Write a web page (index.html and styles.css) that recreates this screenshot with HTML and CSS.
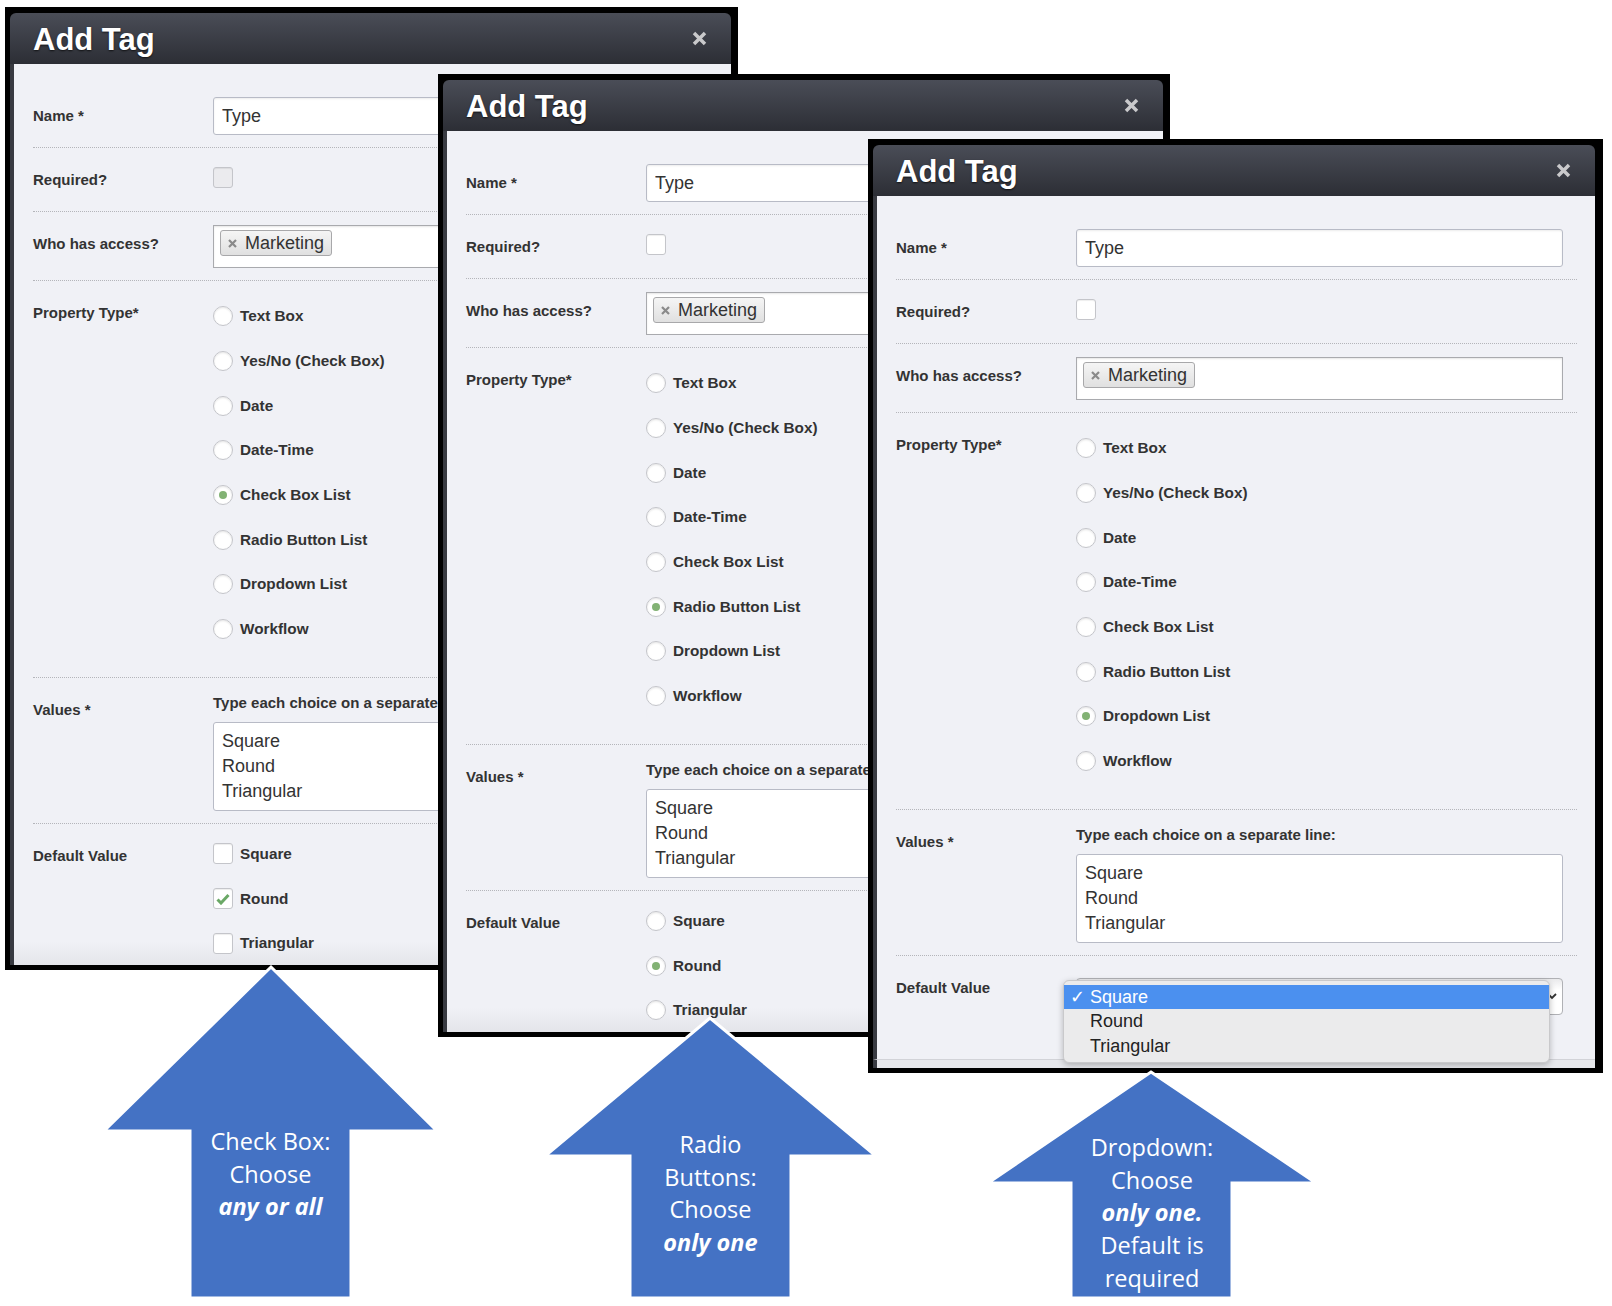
FILE: index.html
```html
<!DOCTYPE html>
<html lang="en">
<head>
  <meta charset="UTF-8">
  <meta name="viewport" content="width=device-width, initial-scale=1.0">
  <title>Add Tag - property types</title>
  <link rel="stylesheet" href="styles.css">
</head>
<body>
<div class="canvas">

  <!-- check box list -->
  <section class="win win-1">
    <div class="modal">
      <header class="modal-head">
        <h2>Add Tag</h2>
        <svg class="close" width="15" height="15" viewBox="0 0 15 15"><path d="M2 2L13 13M13 2L2 13"/></svg>
      </header>
      <div class="modal-body">
        <div class="row">
          <div class="row-label">Name *</div>
          <div class="row-field"><input class="text-input" type="text" value="Type"></div>
        </div>
        <div class="row">
          <div class="row-label">Required?</div>
          <div class="row-field"><div class="check-wrap"><span class="checkbox is-muted"></span></div></div>
        </div>
        <div class="row">
          <div class="row-label">Who has access?</div>
          <div class="row-field">
            <div class="tag-box"><span class="tag"><svg class="tag-x" width="9" height="9" viewBox="0 0 9 9"><path d="M1 1L8 8M8 1L1 8"/></svg>Marketing</span></div>
          </div>
        </div>
        <div class="row">
          <div class="row-label">Property Type*</div>
          <div class="row-field opt-list">
            <div class="opt"><span class="radio"></span>Text Box</div>
            <div class="opt"><span class="radio"></span>Yes/No (Check Box)</div>
            <div class="opt"><span class="radio"></span>Date</div>
            <div class="opt"><span class="radio"></span>Date-Time</div>
            <div class="opt"><span class="radio is-on"></span>Check Box List</div>
            <div class="opt"><span class="radio"></span>Radio Button List</div>
            <div class="opt"><span class="radio"></span>Dropdown List</div>
            <div class="opt"><span class="radio"></span>Workflow</div>
          </div>
        </div>
        <div class="row">
          <div class="row-label">Values *</div>
          <div class="row-field">
            <div class="help">Type each choice on a separate line:</div>
            <textarea class="values" rows="3">Square
Round
Triangular</textarea>
          </div>
        </div>
        <div class="row row-last">
          <div class="row-label">Default Value</div>
          <div class="row-field opt-list is-default">
            <div class="opt"><span class="checkbox"></span>Square</div>
            <div class="opt"><span class="checkbox"><svg width="14" height="12" viewBox="0 0 14 12"><path class="tick" d="M1.5 6.5L5 10L12.5 2"/></svg></span>Round</div>
            <div class="opt"><span class="checkbox"></span>Triangular</div>
          </div>
        </div>
      </div>
    </div>
  </section>

  <!-- radio button list -->
  <section class="win win-2">
    <div class="modal">
      <header class="modal-head">
        <h2>Add Tag</h2>
        <svg class="close" width="15" height="15" viewBox="0 0 15 15"><path d="M2 2L13 13M13 2L2 13"/></svg>
      </header>
      <div class="modal-body">
        <div class="row">
          <div class="row-label">Name *</div>
          <div class="row-field"><input class="text-input" type="text" value="Type"></div>
        </div>
        <div class="row">
          <div class="row-label">Required?</div>
          <div class="row-field"><div class="check-wrap"><span class="checkbox"></span></div></div>
        </div>
        <div class="row">
          <div class="row-label">Who has access?</div>
          <div class="row-field">
            <div class="tag-box"><span class="tag"><svg class="tag-x" width="9" height="9" viewBox="0 0 9 9"><path d="M1 1L8 8M8 1L1 8"/></svg>Marketing</span></div>
          </div>
        </div>
        <div class="row">
          <div class="row-label">Property Type*</div>
          <div class="row-field opt-list">
            <div class="opt"><span class="radio"></span>Text Box</div>
            <div class="opt"><span class="radio"></span>Yes/No (Check Box)</div>
            <div class="opt"><span class="radio"></span>Date</div>
            <div class="opt"><span class="radio"></span>Date-Time</div>
            <div class="opt"><span class="radio"></span>Check Box List</div>
            <div class="opt"><span class="radio is-on"></span>Radio Button List</div>
            <div class="opt"><span class="radio"></span>Dropdown List</div>
            <div class="opt"><span class="radio"></span>Workflow</div>
          </div>
        </div>
        <div class="row">
          <div class="row-label">Values *</div>
          <div class="row-field">
            <div class="help">Type each choice on a separate line:</div>
            <textarea class="values" rows="3">Square
Round
Triangular</textarea>
          </div>
        </div>
        <div class="row row-last">
          <div class="row-label">Default Value</div>
          <div class="row-field opt-list is-default">
            <div class="opt"><span class="radio"></span>Square</div>
            <div class="opt"><span class="radio is-on"></span>Round</div>
            <div class="opt"><span class="radio"></span>Triangular</div>
          </div>
        </div>
      </div>
    </div>
  </section>

  <!-- dropdown list -->
  <section class="win win-3">
    <div class="modal">
      <header class="modal-head">
        <h2>Add Tag</h2>
        <svg class="close" width="15" height="15" viewBox="0 0 15 15"><path d="M2 2L13 13M13 2L2 13"/></svg>
      </header>
      <div class="modal-body">
        <div class="row">
          <div class="row-label">Name *</div>
          <div class="row-field"><input class="text-input" type="text" value="Type"></div>
        </div>
        <div class="row">
          <div class="row-label">Required?</div>
          <div class="row-field"><div class="check-wrap"><span class="checkbox"></span></div></div>
        </div>
        <div class="row">
          <div class="row-label">Who has access?</div>
          <div class="row-field">
            <div class="tag-box"><span class="tag"><svg class="tag-x" width="9" height="9" viewBox="0 0 9 9"><path d="M1 1L8 8M8 1L1 8"/></svg>Marketing</span></div>
          </div>
        </div>
        <div class="row">
          <div class="row-label">Property Type*</div>
          <div class="row-field opt-list">
            <div class="opt"><span class="radio"></span>Text Box</div>
            <div class="opt"><span class="radio"></span>Yes/No (Check Box)</div>
            <div class="opt"><span class="radio"></span>Date</div>
            <div class="opt"><span class="radio"></span>Date-Time</div>
            <div class="opt"><span class="radio"></span>Check Box List</div>
            <div class="opt"><span class="radio"></span>Radio Button List</div>
            <div class="opt"><span class="radio is-on"></span>Dropdown List</div>
            <div class="opt"><span class="radio"></span>Workflow</div>
          </div>
        </div>
        <div class="row">
          <div class="row-label">Values *</div>
          <div class="row-field">
            <div class="help">Type each choice on a separate line:</div>
            <textarea class="values" rows="3">Square
Round
Triangular</textarea>
          </div>
        </div>
        <div class="row row-last">
          <div class="row-label">Default Value</div>
          <div class="row-field">
            <div class="select">
              <svg class="select-caret" width="10" height="8" viewBox="0 0 10 8"><path d="M1 2L5 6L9 2"/></svg>
              <ul class="select-menu">
                <li class="is-on">Square</li>
                <li>Round</li>
                <li>Triangular</li>
              </ul>
            </div>
          </div>
        </div>
      </div>
      <div class="modal-foot"></div>
    </div>
  </section>

  <div class="arrow arrow-1">
    <svg class="arrow-shape" viewBox="0 0 333 331" preserveAspectRatio="none"><polygon points="167,0 333,164 247,164 247,331 86,331 86,164 0,164"/></svg>
    <p class="arrow-text">Check Box:<br>Choose<br><em>any or all</em></p>
  </div>
  <div class="arrow arrow-2">
    <svg class="arrow-shape" viewBox="0 0 331 280" preserveAspectRatio="none"><polygon points="165,0 331,138 246,138 246,280 85,280 85,138 0,138"/></svg>
    <p class="arrow-text">Radio<br>Buttons:<br>Choose<br><em>only one</em></p>
  </div>
  <div class="arrow arrow-3">
    <svg class="arrow-shape" viewBox="0 0 328 226" preserveAspectRatio="none"><polygon points="163,0 328,111 244,111 244,226 83,226 83,111 0,111"/></svg>
    <p class="arrow-text">Dropdown:<br>Choose<br><em>only one.</em><br>Default is<br>required</p>
  </div>

</div>
</body>
</html>
```

FILE: styles.css
```css
* { box-sizing: border-box; }
body { margin: 0; background: #fff; font-family: "Liberation Sans", Arial, sans-serif; color: #333; }
.canvas { position: relative; width: 1612px; height: 1306px; overflow: hidden; }

/* screenshot frames */
.win { position: absolute; background: #000; padding: 6px 7px 5px 5px; }
.win-1 { left: 5px; top: 7px; width: 733px; height: 963px; }
.win-2 { left: 438px; top: 74px; width: 732px; height: 963px; }
.win-3 { left: 868px; top: 139px; width: 735px; height: 934px; padding-right: 8px; }

.modal { display: flex; flex-direction: column; height: 100%; border-radius: 6px 6px 0 0; overflow: hidden; }
.modal-head { height: 51px; flex: none; display: flex; align-items: center; justify-content: space-between; padding: 2px 24px 0 23px; background: linear-gradient(#4a4d57, #2c2e35); }
.modal-head h2 { margin: 0; font-size: 31px; font-weight: bold; color: #fff; text-shadow: 0 1px 2px rgba(0,0,0,.7); }
.close { margin-top: -2px; }
.close path { stroke: #c9c9cb; stroke-width: 3.5; fill: none; }

.modal-body { flex: 1; min-height: 0; overflow: hidden; padding: 20px 18px 0 19px; border-left: 4px solid #383a41; background: linear-gradient(#f0f1f6 calc(100% - 24px), #e4e5ea); }
.win-3 .modal-body { overflow: visible; background: #f0f1f6; }
.modal-foot { height: 9px; flex: none; border-left: 4px solid #383a41; border-top: 1px solid #d2d3d8; background: #e6e7eb; }

/* form rows */
.row { display: flex; padding: 13px 14px 12px 0; border-bottom: 1px dotted #b4b5ba; }
.row-last { border-bottom: none; }
.row-label { width: 180px; flex: none; font-size: 15px; font-weight: bold; line-height: 38px; color: #333; }
.row-field { flex: 1; min-width: 0; }

.text-input { display: block; width: 100%; height: 38px; padding: 0 8px; font: 18px "Liberation Sans", Arial, sans-serif; color: #333; border: 1px solid #b8bbc6; border-radius: 3px; background: #fff; box-shadow: inset 0 1px 2px rgba(0,0,0,.08); outline: none; }
.check-wrap { height: 38px; padding-top: 6px; }

.checkbox { display: flex; align-items: center; justify-content: center; flex: none; width: 20px; height: 21px; border: 1px solid #c4c5ca; border-radius: 3px; background: #fff; box-shadow: inset 0 1px 1px rgba(0,0,0,.07); }
.checkbox.is-muted { background: #ebebee; }
.tick { fill: none; stroke: #6aa866; stroke-width: 3; }
.radio { display: flex; align-items: center; justify-content: center; flex: none; width: 20px; height: 20px; border: 1px solid #c4c5ca; border-radius: 50%; background: #fff; box-shadow: inset 0 1px 2px rgba(0,0,0,.1); }
.radio.is-on::after { content: ""; width: 8px; height: 8px; border-radius: 50%; background: #82b274; }

.tag-box { height: 43px; padding: 4px 6px; border: 1px solid #a9aaae; background: #fff; box-shadow: inset 0 1px 2px rgba(0,0,0,.1); }
.tag { display: inline-flex; align-items: center; height: 26px; padding: 0 7px 0 7px; border: 1px solid #a8a8aa; border-radius: 3px; background: linear-gradient(#f5f5f5, #e0e0e0); font-size: 18px; color: #333; }
.tag-x { margin-right: 8px; }
.tag-x path { stroke: #8a8a8a; stroke-width: 2.2; fill: none; }

.opt-list { padding-bottom: 13px; }
.opt-list.is-default { margin-top: -5px; padding-bottom: 0; }
.opt { display: flex; align-items: center; height: 44.7px; font-size: 15.3px; font-weight: bold; color: #333; }
.opt .radio, .opt .checkbox { margin-right: 7px; }

.help { font-size: 15px; font-weight: bold; line-height: 24px; white-space: nowrap; }
.values { display: block; width: 100%; height: 89px; margin-top: 7px; padding: 6px 8px; font: 18px/25px "Liberation Sans", Arial, sans-serif; color: #333; border: 1px solid #b8bbc6; border-radius: 3px; background: #fff; resize: none; overflow: hidden; outline: none; }

/* dropdown */
.select { position: relative; height: 37px; margin-top: 9px; border: 1px solid #b0b1b5; border-radius: 4px; background: linear-gradient(#e9e9eb, #fff 30%); }
.select-caret { position: absolute; right: 5px; top: 13px; }
.select-caret path { stroke: #333; stroke-width: 1.8; fill: none; }
.select-menu { position: absolute; z-index: 1; left: -14px; top: 1px; width: 487px; margin: 0; padding: 4px 0; list-style: none; background: #ebebec; border: 1px solid #c9c9cb; border-radius: 6px; box-shadow: 0 2px 6px rgba(0,0,0,.25); }
.select-menu li { position: relative; height: 24.5px; line-height: 24.5px; padding-left: 26px; font-size: 18px; color: #222; }
.select-menu li.is-on { background: #4b90ef; color: #fff; }
.select-menu li.is-on::before { content: "\2713"; position: absolute; left: 6px; font-family: "DejaVu Sans", sans-serif; font-size: 18px; }

/* callout arrows */
.arrow { position: absolute; }
.arrow-1 { left: 104px; top: 967px; width: 333px; height: 331px; }
.arrow-2 { left: 545px; top: 1018px; width: 331px; height: 280px; }
.arrow-3 { left: 988px; top: 1072px; width: 328px; height: 226px; }
.arrow-shape { position: absolute; left: 0; top: 0; width: 100%; height: 100%; overflow: visible; }
.arrow-shape polygon { fill: #4472c4; stroke: #fff; stroke-width: 3; }
.arrow-text { position: relative; margin: 0; text-align: center; color: #fff; font-family: "Open Sans", sans-serif; font-size: 23.5px; line-height: 32.7px; }
.arrow-text em { font-weight: bold; font-style: italic; }
.arrow-1 .arrow-text { padding-top: 158px; }
.arrow-2 .arrow-text { padding-top: 110px; }
.arrow-3 .arrow-text { padding-top: 59px; }
```
